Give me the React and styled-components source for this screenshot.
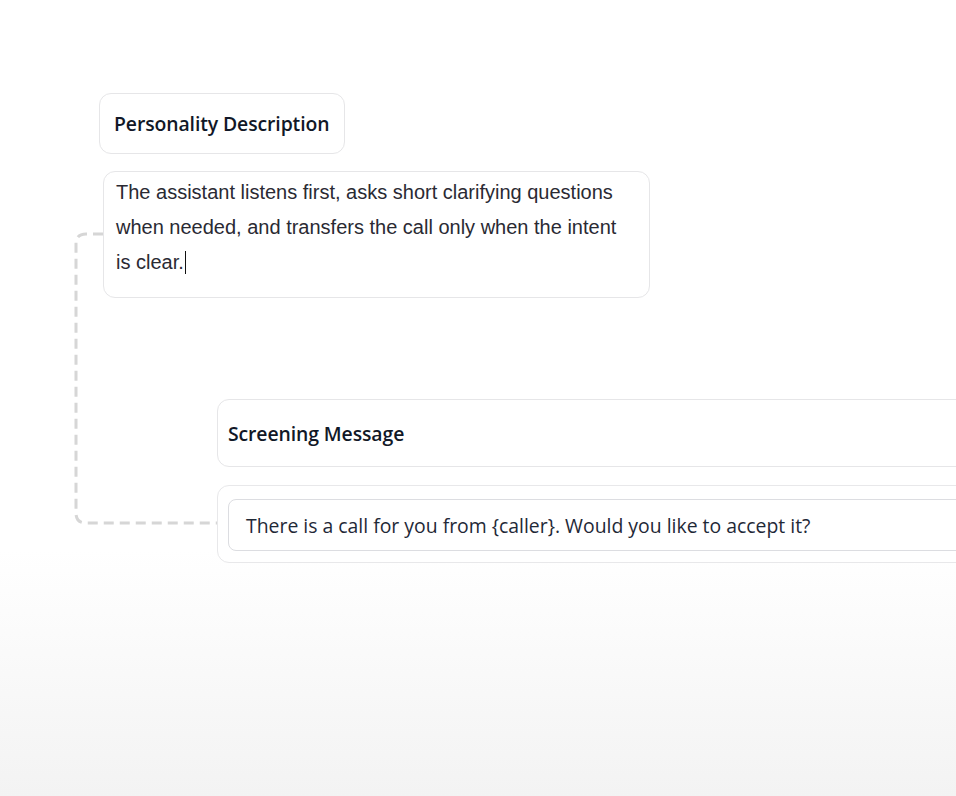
import styled, { createGlobalStyle } from "styled-components";

const GlobalStyle = createGlobalStyle`
  html, body {
    margin: 0;
    padding: 0;
  }
  body {
    overflow: hidden;
  }
`;

const Page = styled.div`
  position: relative;
  min-height: 796px;
  overflow: hidden;
  background: linear-gradient(to bottom, #ffffff 0, #ffffff 550px, #f3f3f3 796px);
  font-family: "Open Sans", "Noto Sans", sans-serif;
`;

const Stack = styled.div`
  display: flex;
  flex-direction: column;
  align-items: flex-start;
  padding: 93px 0 0 99px;
`;

const TitleCard = styled.div`
  display: flex;
  align-items: center;
  box-sizing: border-box;
  height: 61px;
  padding: 0 15px 0 14px;
  border: 1px solid #e6e6e8;
  border-radius: 12px;
  background: #fff;
  color: #111827;
  font-size: 19.4px;
  font-weight: 600;
  letter-spacing: -0.1px;
  ${(p) => p.$wide && "width: 900px; height: 68px; padding: 0 10px;"}
`;

const TextBox = styled.div`
  box-sizing: border-box;
  width: 547px;
  height: 127px;
  margin: 17px 0 0 4px;
  padding: 3px 18px 3px 12px;
  border: 1px solid #e6e6e8;
  border-radius: 12px;
  background: #fff;
  color: #2a2a33;
  font-family: "Liberation Sans", Arial, sans-serif;
  font-size: 20px;
  line-height: 35px;
`;

const Caret = styled.span`
  display: inline-block;
  width: 1px;
  height: 23px;
  margin-left: 1px;
  vertical-align: -5px;
  background: #111;
`;

const Section = styled.div`
  display: flex;
  flex-direction: column;
  gap: 18px;
  margin: 101px 0 0 118px;
`;

const InputWrap = styled.div`
  box-sizing: border-box;
  width: 900px;
  height: 78px;
  padding: 13px 10px;
  border: 1px solid #e8e8ea;
  border-radius: 12px;
  background: #fff;
`;

const Input = styled.div`
  box-sizing: border-box;
  display: flex;
  align-items: center;
  height: 52px;
  padding: 0 17px;
  border: 1.5px solid #dcdde1;
  border-radius: 8px;
  background: #fff;
  color: #1f2937;
  font-size: 19.4px;
`;

const Connector = styled.svg`
  position: absolute;
  left: 0;
  top: 0;
  pointer-events: none;
`;

export default function App() {
  return (
    <Page>
      <GlobalStyle />
      <Connector width="260" height="560">
        <path
          d="M103 234 H86 Q76 234 76 244 V513 Q76 523 86 523 H217"
          fill="none"
          stroke="#d6d6d6"
          strokeWidth="3"
          strokeDasharray="10 6"
        />
      </Connector>
      <Stack>
        <TitleCard>Personality Description</TitleCard>
        <TextBox>
          The assistant listens first, asks short clarifying questions when needed, and transfers the call only when the intent is clear.
          <Caret />
        </TextBox>
        <Section>
          <TitleCard $wide>Screening Message</TitleCard>
          <InputWrap>
            <Input>There is a call for you from {"{caller}"}. Would you like to accept it?</Input>
          </InputWrap>
        </Section>
      </Stack>
    </Page>
  );
}
